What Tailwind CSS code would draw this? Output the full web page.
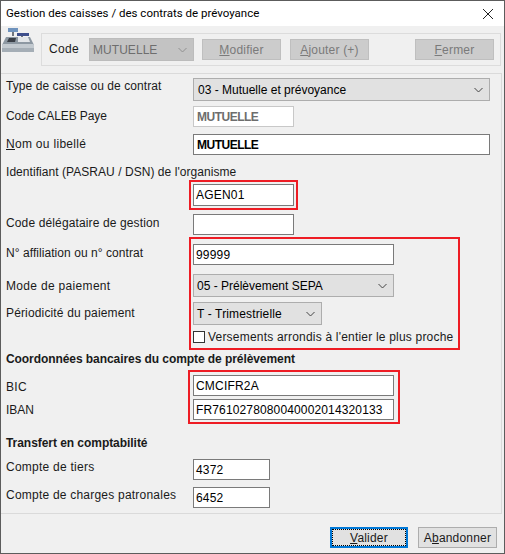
<!DOCTYPE html>
<html lang="fr"><head><meta charset="utf-8"><script src="https://cdn.jsdelivr.net/npm/@tailwindcss/browser@4"></script></head>
<body class="m-0 bg-[#f0f0f0]">
<div class="relative w-[505px] h-[554px] overflow-hidden flex flex-col border border-[#5c5c5c] bg-[#f0f0f0] font-['Liberation_Sans',Arial,sans-serif] text-[12px] leading-[14px] tracking-[0.2px] text-[#1a1a1a]">
  <div class="h-[25px] shrink-0 bg-white flex items-center justify-between pl-[5px] pr-[10px]">
    <span class="font-['Roboto',sans-serif] text-[11.5px] tracking-normal text-black pb-[1px]">Gestion des caisses / des contrats de prévoyance</span>
    <svg width="12" height="12" viewBox="0 0 12 12"><path d="M1 1L11 11M11 1L1 11" stroke="#222" stroke-width="1" fill="none"/></svg>
  </div>
  <div class="h-[47px] shrink-0 flex items-start pt-[7px] pr-[3px]">
    <div class="w-[40px] h-[26px] shrink-0 -mt-[6px]">
      <svg width="34" height="26" viewBox="0 0 34 26">
        <rect x="7" y="1" width="10" height="4" fill="#6f93bd"/><rect x="11" y="5" width="2" height="4" fill="#70767e"/>
        <rect x="16" y="6" width="12" height="3" fill="#3e4f8c"/><rect x="20" y="9" width="2" height="2" fill="#70767e"/>
        <path d="M6 10H14V14H6Z" fill="#2d3138"/>
        <path d="M5 10H29L33 18H1Z" fill="#8d98a2"/><path d="M8 11H15L14 15H6Z" fill="#3a3f47"/><path d="M17 10H27L29 15H17Z" fill="#e3e6e9"/>
        <rect x="1" y="17" width="32" height="8" rx="1" fill="#c3cad0"/><rect x="1" y="21" width="32" height="4" fill="#a5aeb6"/>
      </svg>
    </div>
    <div class="h-[33px] flex-1 flex items-center border border-[#dcdcdc] pl-[7px] pr-[6px]">
      <span class="w-[40px] pb-[1px] tracking-[0.32px]">Code</span>
      <div class="w-[105px] h-[23px] bg-[#c3c3c3] border border-[#bcbcbc] flex items-center justify-between pl-[3px] pr-[6px] text-[#6e6e6e] tracking-[0.05px]">MUTUELLE<svg width="9" height="6" viewBox="0 0 9 6"><path d="M0.5 1L4.5 5L8.5 1" stroke="#909090" fill="none"/></svg></div>
      <div class="ml-[8px] w-[79px] h-[21px] bg-[#cccccc] border border-[#bfbfbf] flex items-center justify-center text-[#7a7a7a]"><span><u>M</u>odifier</span></div>
      <div class="ml-[9px] w-[79px] h-[21px] bg-[#cccccc] border border-[#bfbfbf] flex items-center justify-center text-[#7a7a7a]"><span><u>A</u>jouter (+)</span></div>
      <div class="ml-auto w-[79px] h-[21px] bg-[#cccccc] border border-[#bfbfbf] flex items-center justify-center text-[#7a7a7a]"><span><u>F</u>ermer</span></div>
    </div>
  </div>
  <div class="relative h-[441px] shrink-0 mr-[2px] border-t border-b border-r border-[#dadada] pl-[5px] pt-[4px]">
    <div class="flex items-start"><span class="w-[187px] pt-[1px] tracking-[0.07px]">Type de caisse ou de contrat</span>
      <div class="w-[297px] h-[23px] bg-[#e1e1e1] border border-[#adadad] flex items-center justify-between pl-[4px] pr-[6px] text-black tracking-[0px]"><span>03 - Mutuelle et prévoyance</span><svg width="9" height="6" viewBox="0 0 9 6"><path d="M0.5 1L4.5 5L8.5 1" stroke="#444" fill="none"/></svg></div></div>
    <div class="flex items-start mt-[5px]"><span class="w-[187px] pt-[3px] tracking-[-0.08px]">Code CALEB Paye</span>
      <div class="w-[101px] h-[21px] bg-white border border-[#c8c8c8] flex items-center pl-[3px] font-bold text-[#6d6d6d] tracking-[-0.5px]">MUTUELLE</div></div>
    <div class="flex items-start mt-[7px]"><span class="w-[187px] pt-[3px] tracking-[0.3px]"><u>N</u>om ou libellé</span>
      <div class="w-[297px] h-[21px] bg-white border border-[#7a7a7a] flex items-center pl-[3px] font-bold text-black tracking-[-0.5px]">MUTUELLE</div></div>
    <div class="mt-[10px] tracking-[0.05px]">Identifiant (PASRAU / DSN) de l'organisme</div>
    <div class="flex items-start mt-[5px]"><span class="w-[187px]"></span>
      <div class="w-[101px] h-[22px] bg-white border border-[#7a7a7a] flex items-center pl-[2px] text-black">AGEN01</div></div>
    <div class="flex items-start mt-[8px]"><span class="w-[187px] pt-[2px] tracking-[0.13px]">Code délégataire de gestion</span>
      <div class="w-[101px] h-[21px] bg-white border border-[#7a7a7a]"></div></div>
    <div class="flex items-start mt-[9px]"><span class="w-[187px] pt-[2px] tracking-[0.06px]">N° affiliation ou n° contrat</span>
      <div class="w-[201px] h-[21px] bg-white border border-[#7a7a7a] flex items-center pl-[2px] text-black">99999</div></div>
    <div class="flex items-start mt-[9px]"><span class="w-[187px] pt-[5px] tracking-[0.32px]">Mode de paiement</span>
      <div class="w-[201px] h-[23px] bg-[#e1e1e1] border border-[#adadad] flex items-center justify-between pl-[3px] pr-[6px] text-black tracking-[0px]"><span>05 - Prélèvement SEPA</span><svg width="9" height="6" viewBox="0 0 9 6"><path d="M0.5 1L4.5 5L8.5 1" stroke="#444" fill="none"/></svg></div></div>
    <div class="flex items-start mt-[5px]"><span class="w-[187px] pt-[4px] tracking-[0.15px]">Périodicité du paiement</span>
      <div class="w-[129px] h-[23px] bg-[#e1e1e1] border border-[#adadad] flex items-center justify-between pl-[3px] pr-[6px] text-black tracking-[0.14px]"><span>T - Trimestrielle</span><svg width="9" height="6" viewBox="0 0 9 6"><path d="M0.5 1L4.5 5L8.5 1" stroke="#444" fill="none"/></svg></div></div>
    <div class="flex items-center mt-[6px] ml-[187px] h-[12px]">
      <span class="w-[12px] h-[12px] bg-white border border-[#333] mr-[3px]"></span><span class="whitespace-nowrap">Versements arrondis à l'entier le plus proche</span></div>
    <div class="mt-[9px] font-bold tracking-[-0.07px]">Coordonnées bancaires du compte de prélèvement</div>
    <div class="flex items-start mt-[9px]"><span class="w-[187px] pt-[5px] tracking-[0.32px]">BIC</span>
      <div class="w-[201px] h-[21px] bg-white border border-[#7a7a7a] flex items-center pl-[2px] text-black">CMCIFR2A</div></div>
    <div class="flex items-start mt-[3px]"><span class="w-[187px] pt-[4px] tracking-[0px]">IBAN</span>
      <div class="w-[201px] h-[21px] bg-white border border-[#7a7a7a] flex items-center pl-[2px] text-black tracking-[0.14px]">FR7610278080040002014320133</div></div>
    <div class="mt-[16px] font-bold tracking-[-0.05px]">Transfert en comptabilité</div>
    <div class="flex items-start mt-[9px]"><span class="w-[187px] pt-[1px] tracking-[0.25px]">Compte de tiers</span>
      <div class="w-[77px] h-[21px] bg-white border border-[#7a7a7a] flex items-center pl-[2px] text-black">4372</div></div>
    <div class="flex items-start mt-[7px]"><span class="w-[187px] pt-[1px] tracking-[0.22px]">Compte de charges patronales</span>
      <div class="w-[77px] h-[21px] bg-white border border-[#7a7a7a] flex items-center pl-[2px] text-black">6452</div></div>
    <div class="absolute left-[188px] top-[106px] w-[109px] h-[30px] border-2 border-[#ee1c24]"></div>
    <div class="absolute left-[188px] top-[163px] w-[271px] h-[113px] border-2 border-[#ee1c24]"></div>
    <div class="absolute left-[187px] top-[296px] w-[212px] h-[54px] border-2 border-[#ee1c24]"></div>
  </div>
  <div class="flex-1 flex items-start justify-end pt-[13px] pr-[7px] gap-[10px]">
    <div class="w-[78px] h-[21px] bg-[#e1e1e1] border-2 border-[#0078d7] flex items-center justify-center"><div class="w-[74px] h-[17px] border border-dotted border-black flex items-center justify-center"><span><u>V</u>alider</span></div></div>
    <div class="w-[79px] h-[21px] bg-[#e1e1e1] border border-[#adadad] flex items-center justify-center"><span>A<u>b</u>andonner</span></div>
  </div>
</div>
</body></html>
